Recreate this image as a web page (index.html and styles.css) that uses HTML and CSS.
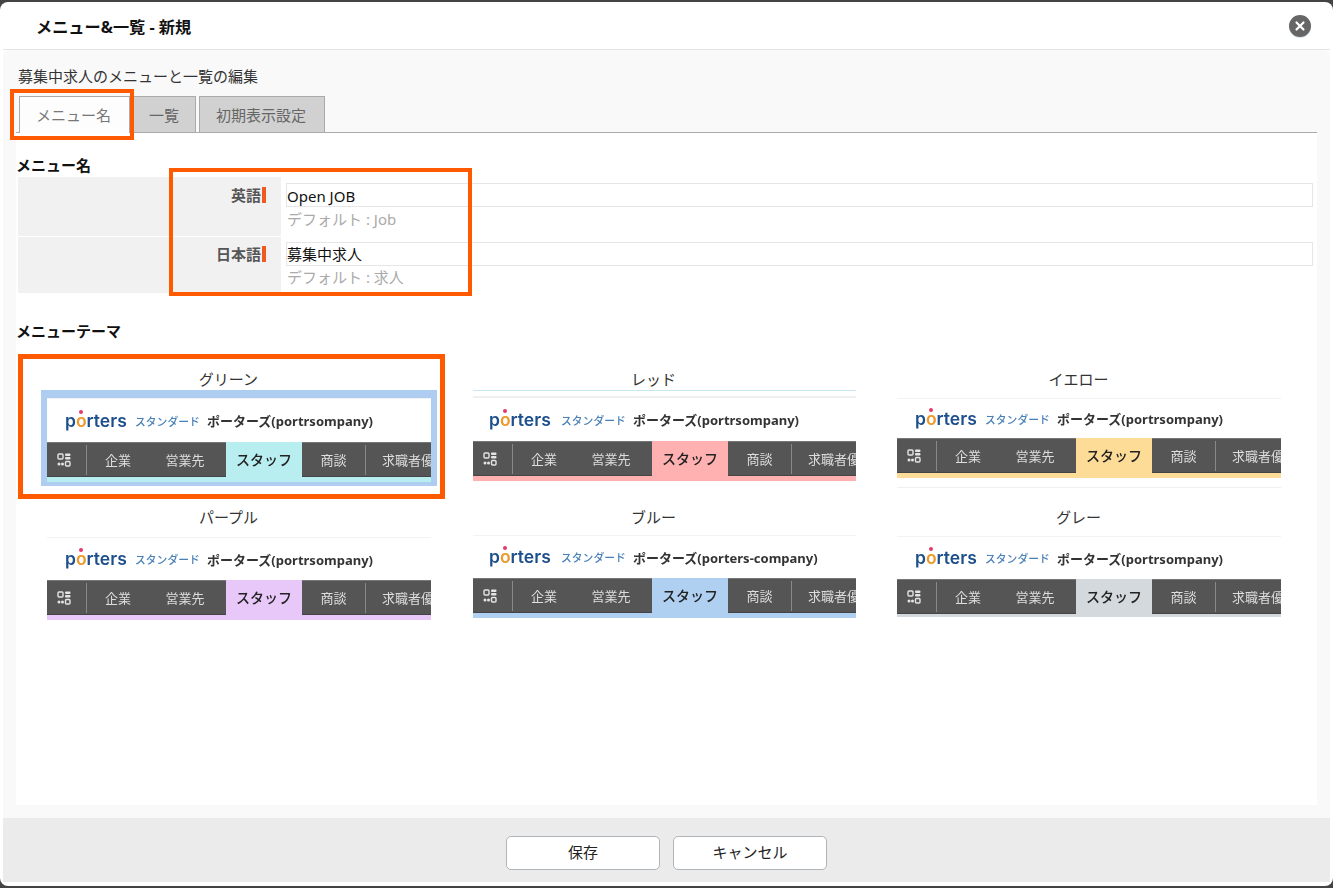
FILE: index.html
```html
<!DOCTYPE html>
<html lang="ja">
<head>
    <meta charset="UTF-8">
    <title>メニュー&amp;一覧 - 新規</title>
    <link rel="stylesheet" href="styles.css">
</head>
<body>

    <svg class="icon-defs" width="0" height="0">
        <symbol id="apps" viewBox="0 0 14 14">
            <rect x="1" y="1" width="5" height="5" rx="1" fill="none" stroke="#e4e4e4" stroke-width="1.4"/>
            <rect x="8" y="0.5" width="5.5" height="2.4" rx="1" fill="#e4e4e4"/>
            <rect x="8" y="4" width="5.5" height="2.4" rx="1" fill="#e4e4e4"/>
            <circle cx="2" cy="11" r="1.5" fill="#e4e4e4"/>
            <circle cx="5.5" cy="11" r="1.5" fill="#e4e4e4"/>
            <rect x="8.5" y="8.5" width="4.5" height="4.5" rx="1" fill="none" stroke="#e4e4e4" stroke-width="1.4"/>
        </symbol>
    </svg>

    <div class="modal">
        <!-- Title bar -->
        <div class="modal-header">
            <div class="modal-title">メニュー&amp;一覧 - 新規</div>
            <div class="close-btn">
                <svg width="12" height="12" viewBox="0 0 12 12"><path d="M2.5 2.5 L9.5 9.5 M9.5 2.5 L2.5 9.5" stroke="#fff" stroke-width="2.2" stroke-linecap="round"/></svg>
            </div>
        </div>

        <div class="modal-body">
            <div class="intro">募集中求人のメニューと一覧の編集</div>

            <div class="tabs">
                <div class="tab active">メニュー名</div>
                <div class="tab short">一覧</div>
                <div class="tab">初期表示設定</div>
            </div>

            <div class="panel">
                <div class="section-title">メニュー名</div>

                <div class="form-row row-en">
                    <div class="form-label">英語<span class="required"></span></div>
                    <div class="form-field">
                        <div class="text-input">Open JOB</div>
                        <div class="hint">デフォルト : Job</div>
                    </div>
                </div>
                <div class="form-row row-ja">
                    <div class="form-label">日本語<span class="required"></span></div>
                    <div class="form-field">
                        <div class="text-input">募集中求人</div>
                        <div class="hint">デフォルト : 求人</div>
                    </div>
                </div>

                <div class="section-title theme-heading">メニューテーマ</div>

                <div class="theme-grid">

                    <!-- Green -->
                    <div class="theme green">
                        <div class="theme-name">グリーン</div>
                        <div class="thumb">
                            <div class="thumb-head">
                                <div class="logo">p<span class="logo-o">o</span>rters</div>
                                <div class="edition">スタンダード</div>
                                <div class="company">ポーターズ(portrsompany)</div>
                            </div>
                            <div class="thumb-nav">
                                <div class="nav-apps"><svg width="14" height="14"><use href="#apps"/></svg></div>
                                <div class="nav-item first">企業</div>
                                <div class="nav-item second">営業先</div>
                                <div class="nav-item current">スタッフ</div>
                                <div class="nav-item third">商談</div>
                                <div class="nav-item last">求職者優</div>
                            </div>
                            <div class="thumb-strip"></div>
                        </div>
                    </div>

                    <!-- Red -->
                    <div class="theme red">
                        <div class="theme-name">レッド</div>
                        <div class="thumb">
                            <div class="thumb-head">
                                <div class="logo">p<span class="logo-o">o</span>rters</div>
                                <div class="edition">スタンダード</div>
                                <div class="company">ポーターズ(portrsompany)</div>
                            </div>
                            <div class="thumb-nav">
                                <div class="nav-apps"><svg width="14" height="14"><use href="#apps"/></svg></div>
                                <div class="nav-item first">企業</div>
                                <div class="nav-item second">営業先</div>
                                <div class="nav-item current">スタッフ</div>
                                <div class="nav-item third">商談</div>
                                <div class="nav-item last">求職者優</div>
                            </div>
                            <div class="thumb-strip"></div>
                        </div>
                    </div>

                    <!-- Yellow -->
                    <div class="theme yellow">
                        <div class="theme-name">イエロー</div>
                        <div class="thumb">
                            <div class="thumb-head">
                                <div class="logo">p<span class="logo-o">o</span>rters</div>
                                <div class="edition">スタンダード</div>
                                <div class="company">ポーターズ(portrsompany)</div>
                            </div>
                            <div class="thumb-nav">
                                <div class="nav-apps"><svg width="14" height="14"><use href="#apps"/></svg></div>
                                <div class="nav-item first">企業</div>
                                <div class="nav-item second">営業先</div>
                                <div class="nav-item current">スタッフ</div>
                                <div class="nav-item third">商談</div>
                                <div class="nav-item last">求職者優</div>
                            </div>
                            <div class="thumb-strip"></div>
                        </div>
                    </div>

                    <!-- Purple -->
                    <div class="theme purple">
                        <div class="theme-name">パープル</div>
                        <div class="thumb">
                            <div class="thumb-head">
                                <div class="logo">p<span class="logo-o">o</span>rters</div>
                                <div class="edition">スタンダード</div>
                                <div class="company">ポーターズ(portrsompany)</div>
                            </div>
                            <div class="thumb-nav">
                                <div class="nav-apps"><svg width="14" height="14"><use href="#apps"/></svg></div>
                                <div class="nav-item first">企業</div>
                                <div class="nav-item second">営業先</div>
                                <div class="nav-item current">スタッフ</div>
                                <div class="nav-item third">商談</div>
                                <div class="nav-item last">求職者優</div>
                            </div>
                            <div class="thumb-strip"></div>
                        </div>
                    </div>

                    <!-- Blue -->
                    <div class="theme blue">
                        <div class="theme-name">ブルー</div>
                        <div class="thumb">
                            <div class="thumb-head">
                                <div class="logo">p<span class="logo-o">o</span>rters</div>
                                <div class="edition">スタンダード</div>
                                <div class="company">ポーターズ(porters-company)</div>
                            </div>
                            <div class="thumb-nav">
                                <div class="nav-apps"><svg width="14" height="14"><use href="#apps"/></svg></div>
                                <div class="nav-item first">企業</div>
                                <div class="nav-item second">営業先</div>
                                <div class="nav-item current">スタッフ</div>
                                <div class="nav-item third">商談</div>
                                <div class="nav-item last">求職者優</div>
                            </div>
                            <div class="thumb-strip"></div>
                        </div>
                    </div>

                    <!-- Gray -->
                    <div class="theme gray">
                        <div class="theme-name">グレー</div>
                        <div class="thumb">
                            <div class="thumb-head">
                                <div class="logo">p<span class="logo-o">o</span>rters</div>
                                <div class="edition">スタンダード</div>
                                <div class="company">ポーターズ(portrsompany)</div>
                            </div>
                            <div class="thumb-nav">
                                <div class="nav-apps"><svg width="14" height="14"><use href="#apps"/></svg></div>
                                <div class="nav-item first">企業</div>
                                <div class="nav-item second">営業先</div>
                                <div class="nav-item current">スタッフ</div>
                                <div class="nav-item third">商談</div>
                                <div class="nav-item last">求職者優</div>
                            </div>
                            <div class="thumb-strip"></div>
                        </div>
                    </div>

                </div>
            </div>
        </div>

        <div class="modal-footer">
            <button class="footer-btn">保存</button>
            <button class="footer-btn">キャンセル</button>
        </div>
    </div>

    <!-- Orange annotation boxes drawn over the screenshot -->
    <div class="callout callout-tab"></div>
    <div class="callout callout-names"></div>
    <div class="callout callout-theme"></div>

</body>
</html>
```

FILE: styles.css
```css
* {
    box-sizing: border-box;
}
body {
    font-family: "Noto Sans", "Noto Sans CJK JP", sans-serif;
    font-size: 15px;
    color: #222;
    background-color: #444;
    margin: 0;
    padding-top: 2px;
    height: 888px;
    overflow: hidden;
    position: relative;
}
.icon-defs {
    position: absolute;
}

.modal {
    display: flex;
    flex-direction: column;
    height: 884px;
    padding: 0 3px 4px;
    background-color: #fff;
    border-radius: 8px;
}
.modal-header {
    display: flex;
    align-items: center;
    justify-content: space-between;
    height: 48px;
    padding: 1px 20px 0 33px;
    border-bottom: 1px solid #e4e4e4;
    flex-shrink: 0;
}
.modal-title {
    font-size: 16.2px;
    font-weight: 700;
    color: #111;
}
.close-btn {
    display: flex;
    align-items: center;
    justify-content: center;
    width: 22px;
    height: 22px;
    margin-right: -1px;
    border-radius: 50%;
    background-color: #666;
    box-shadow: 0 1px 1px #d5e2ee;
}

.modal-body {
    display: flex;
    flex-direction: column;
    flex: 1;
    padding: 15px 13px 13px;
    background-color: #f9f9f9;
    border-radius: 6px 6px 0 0;
}
.intro {
    line-height: 22px;
    padding-left: 2px;
    color: #333;
}
.tabs {
    display: flex;
    gap: 3px;
    height: 37px;
    margin-top: 9px;
    padding-left: 3px;
    border-bottom: 1px solid #aaa;
    flex-shrink: 0;
}
.tab {
    height: 37px;
    padding: 0 18px 0 16px;
    line-height: 36px;
    color: #666;
    background-color: #d1d1d1;
    border: 1px solid #aaa;
}
.tab.short {
    padding: 0 16px 0 15px;
}
.tab.active {
    color: #777;
    background-color: #fdfdfd;
    border-bottom: none;
}

.panel {
    flex: 1;
    padding-top: 21px;
    background-color: #fff;
}
.section-title {
    line-height: 22px;
    font-weight: 700;
    color: #111;
}
.theme-heading {
    margin-top: 27px;
}

.form-row {
    display: flex;
    margin-left: 2px;
}
.row-en {
    height: 59px;
}
.row-ja {
    height: 57px;
    border-top: 1px solid #fff;
}
.panel > .section-title:first-child {
    margin-bottom: 1px;
}
.form-label {
    display: flex;
    align-items: flex-start;
    justify-content: flex-end;
    width: 263px;
    padding: 7px 15px 0 0;
    line-height: 22px;
    font-weight: 700;
    color: #555;
    background-color: #f1f1f1;
}
.row-ja .form-label {
    padding-top: 6px;
}
.required {
    width: 4px;
    height: 16px;
    margin: 3px 0 0 1px;
    background-color: #f15a1e;
}
.form-field {
    flex: 1;
    padding: 6px 4px 0 5px;
}
.row-ja .form-field {
    padding-top: 5px;
}
.text-input {
    height: 24px;
    line-height: 24px;
    color: #111;
    border: 1px solid #e6e6e6;
}
.row-ja .text-input {
    line-height: 23px;
}
.hint {
    padding-left: 1px;
    line-height: 24px;
    color: #aaa;
}
.row-ja .hint {
    line-height: 22px;
}

.theme-grid {
    display: grid;
    grid-template-columns: repeat(3, 425px);
    grid-auto-rows: 138px;
    margin: 27px 0 0 0;
}
.theme-name {
    line-height: 20px;
    text-align: center;
    color: #333;
}
.thumb {
    width: 384px;
    margin-left: 31px;
    filter: blur(0.4px);
}
.thumb-head {
    display: flex;
    align-items: center;
    height: 43px;
    padding-left: 18px;
    background-color: #fff;
    border-top: 1px solid #f3f3f3;
}
.logo {
    width: 61px;
    margin-right: 9px;
    font-family: Inter, sans-serif;
    font-size: 17.5px;
    font-weight: 600;
    line-height: 20px;
    color: #1d4f8c;
    white-space: nowrap;
}
.logo-o {
    position: relative;
    color: #ee9a2a;
}
.logo-o::before {
    content: "";
    position: absolute;
    left: 3.5px;
    top: 0;
    width: 4px;
    height: 4px;
    border-radius: 50%;
    background-color: #e6396a;
}
.edition {
    width: 72px;
    font-size: 10.8px;
    font-weight: 500;
    color: #4a80b8;
    white-space: nowrap;
}
.company {
    font-size: 13px;
    font-weight: 700;
    color: #333;
    white-space: nowrap;
}
.thumb-nav {
    display: flex;
    height: 35px;
    overflow: hidden;
    background-color: #555;
    box-shadow: inset 0 1px 0 #777, inset 0 -1px 0 #444;
    font-size: 13px;
    line-height: 36px;
    color: #ddd;
}
.nav-apps {
    display: flex;
    align-items: center;
    justify-content: center;
    flex-shrink: 0;
    width: 40px;
    height: 30px;
    margin-top: 3px;
    padding-right: 5px;
    border-right: 1px solid #888;
}
.nav-item {
    flex-shrink: 0;
    text-align: center;
    white-space: nowrap;
}
.nav-item.first {
    width: 60px;
    padding-left: 2px;
}
.nav-item.second {
    width: 76px;
    margin-right: 3px;
}
.nav-item.current {
    width: 76px;
    font-weight: 500;
    font-size: 14px;
    color: #222;
}
.nav-item.third {
    width: 64px;
    height: 30px;
    margin-top: 3px;
    line-height: 30px;
    border-right: 1px solid #888;
}
.nav-item.last {
    padding-left: 16px;
}
.thumb-strip {
    height: 5px;
}

/* theme colours and the small offsets each preview has */
.green .nav-item.current, .green .thumb-strip { background-color: #b8eef0; }
.red .nav-item.current, .red .thumb-strip { background-color: #ffb0b0; }
.yellow .nav-item.current, .yellow .thumb-strip { background-color: #fddc98; }
.purple .nav-item.current, .purple .thumb-strip { background-color: #e8c8f8; }
.blue .nav-item.current, .blue .thumb-strip { background-color: #b0d0f2; }
.gray .nav-item.current, .gray .thumb-strip { background-color: #d4d9dd; }

.green .thumb {
    box-sizing: content-box;
    margin: 1px 0 0 25px;
    padding: 8px 6px 4px;
    background-color: #aecdf0;
}
.green .thumb-head {
    height: 44px;
}
.red .thumb, .blue .thumb {
    width: 383px;
    margin-left: 32px;
}
.red .thumb {
    margin-top: 1px;
    padding-top: 5px;
    border-top: 1px solid #c8e8f0;
}
.red .thumb-head {
    height: 45px;
    border-top: 2px solid #f0f0f0;
}
.red .logo, .blue .logo {
    margin-left: -2px;
    margin-right: 11px;
}
.yellow .thumb {
    margin-top: 9px;
    padding-bottom: 9px;
    border-bottom: 1px solid #f0f0f0;
}
.yellow .thumb-head {
    height: 40px;
}
.purple .thumb {
    margin-top: 10px;
}
.blue .thumb {
    margin-top: 8px;
}
.gray .thumb {
    margin-top: 9px;
}
.gray .thumb-strip {
    height: 3px;
}

.modal-footer {
    display: flex;
    justify-content: center;
    align-items: center;
    gap: 13px;
    height: 64px;
    padding-top: 6px;
    flex-shrink: 0;
    background-color: #ebebeb;
}
.footer-btn {
    width: 154px;
    height: 34px;
    padding: 0 0 3px;
    font-family: inherit;
    font-size: 15px;
    color: #222;
    background-color: #fff;
    border: 1px solid #b0b5ba;
    border-radius: 5px;
}

.callout {
    position: absolute;
    border: 4px solid #ff5a00;
}
.callout-tab {
    left: 10px;
    top: 89px;
    width: 124px;
    height: 51px;
}
.callout-names {
    left: 169px;
    top: 168px;
    width: 303px;
    height: 128px;
}
.callout-theme {
    left: 18px;
    top: 354px;
    width: 427px;
    height: 145px;
    border-width: 5px;
}
```
